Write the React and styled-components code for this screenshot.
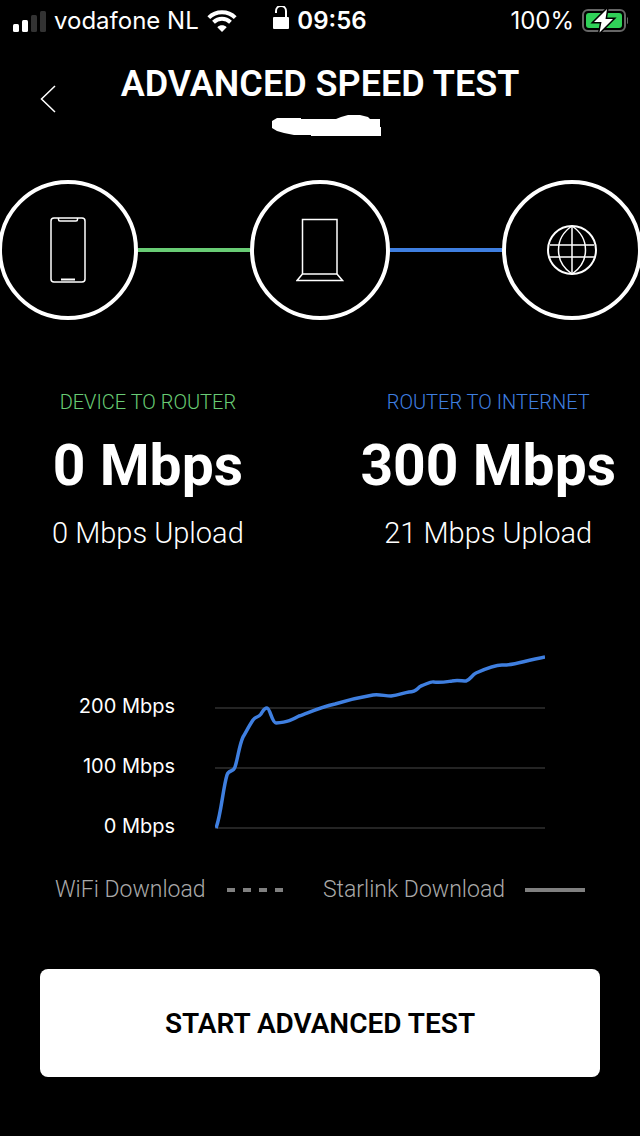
import React from 'react'
import styled, { createGlobalStyle, ThemeProvider } from 'styled-components'

const theme = {
  palette: {
    green: '#69cc75',
    blue: '#3f7fe0',
    gray1: '#242424',
    gray2: '#808080',
    gray3: '#a9a9a9',
  },
}

const GlobalStyle = createGlobalStyle`
  * {
    box-sizing: border-box;
  }

  body {
    margin: 0;
    background: black;
    color: white;
    font-family: Roboto, sans-serif;
  }

  h1, h2, p, ul {
    margin: 0;
    padding: 0;
  }

  svg {
    display: block;
    flex-shrink: 0;
  }
`

const Screen = styled.div`
  display: flex;
  flex-direction: column;
  min-height: 100vh;
`

const StatusBar = styled.header`
  display: grid;
  grid-template-columns: 1fr auto 1fr;
  align-items: center;
  height: 42px;
  padding-inline: 12px;
  font-family: Inter, sans-serif;
  font-size: 24px;
  line-height: 28px;
`

const StatusGroup = styled.div`
  display: flex;
  align-items: center;
  justify-content: ${(props) => props.$align || 'flex-start'};
  gap: 8px;
`

const Clock = styled.time`
  font-weight: 600;
`

const TitleBar = styled.div`
  display: grid;
  grid-template-columns: 56px 1fr 56px;
  align-items: center;
  padding: 18px 20px 0;
`

const BackButton = styled.button`
  display: flex;
  align-items: center;
  justify-content: center;
  height: 56px;
  padding: 0;
  border: none;
  background: none;
  color: white;
  cursor: pointer;
`

const TitleBlock = styled.div`
  display: flex;
  flex-direction: column;
  align-items: center;
  gap: 7px;
`

const Title = styled.h1`
  font-size: 36px;
  font-weight: 600;
  line-height: 48px;
  white-space: nowrap;
`

const Path = styled.div`
  display: flex;
  align-items: center;
  margin: 43px -2px 0;
`

const Node = styled.div`
  display: flex;
  align-items: center;
  justify-content: center;
  flex-shrink: 0;
  width: 140px;
  height: 140px;
  border: 4px solid white;
  border-radius: 50%;
`

const Link = styled.div`
  flex: 1;
  height: 4px;
  background: ${(props) => props.theme.palette[props.$color]};
`

const Results = styled.section`
  display: flex;
  justify-content: space-between;
  padding: 68px 24px 0 52px;
`

const Result = styled.div`
  display: flex;
  flex-direction: column;
  align-items: center;
  white-space: nowrap;
`

const ResultLabel = styled.h2`
  color: ${(props) => props.theme.palette[props.$color]};
  font-size: 20px;
  font-weight: 350;
  line-height: 28px;
`

const Download = styled.p`
  margin-top: 10px;
  font-size: 57px;
  font-weight: 700;
  line-height: 80px;
`

const Upload = styled.p`
  font-size: 29px;
  font-weight: 350;
  line-height: 54px;
`

const Chart = styled.section`
  display: flex;
  gap: 40px;
  padding: 87px 95px 0 76px;
`

const Scale = styled.ul`
  display: flex;
  flex-direction: column;
  align-items: flex-end;
  flex-shrink: 0;
  gap: 32px;
  width: 99px;
  padding-top: 45px;
  list-style: none;
  font-family: Inter, sans-serif;
  font-size: 20px;
  line-height: 28px;
  white-space: nowrap;
`

const Plot = styled.svg`
  flex: 1;
  min-width: 0;
  height: 184px;
`

const Legend = styled.ul`
  display: flex;
  justify-content: space-between;
  padding: 36px 55px 0;
  list-style: none;
`

const LegendItem = styled.li`
  display: flex;
  align-items: center;
  gap: 20px;
  color: ${(props) => props.theme.palette.gray3};
  font-size: 23px;
  font-weight: 350;
  line-height: 28px;
  white-space: nowrap;
`

const Footer = styled.footer`
  padding: 65px 40px 60px;
`

const PrimaryButton = styled.button`
  display: block;
  width: 100%;
  height: 108px;
  border: none;
  border-radius: 8px;
  background: white;
  color: black;
  font-family: inherit;
  font-size: 28px;
  font-weight: 600;
  cursor: pointer;
`

const SignalIcon = () => (
  <svg width="34" height="22" viewBox="0 0 34 22" fill="white">
    <rect x="1" y="14" width="6" height="8" rx="1.5" />
    <rect x="10" y="10" width="6" height="12" rx="1.5" />
    <rect x="19" y="5" width="6" height="17" rx="1.5" fill="#333" />
    <rect x="28" y="1" width="6" height="21" rx="1.5" fill="#333" />
  </svg>
)

const WifiIcon = () => (
  <svg width="30" height="22" viewBox="0 0 30 22" fill="none" stroke="white">
    <path d="M1.8 7.6C9 .4 21 .4 28.2 7.6" strokeWidth="4" />
    <path d="M6.5 12.3C11.3 7.7 18.7 7.7 23.5 12.3" strokeWidth="4" />
    <path d="M15 22 10.3 17.3C13 14.7 17 14.7 19.7 17.3Z" fill="white" stroke="none" />
  </svg>
)

const LockIcon = () => (
  <svg width="16" height="30" viewBox="0 0 16 30">
    <rect x="0" y="11" width="16" height="12" rx="1" fill="white" />
    <path d="M3 7V5a5 5 0 0 1 10 0v7" fill="none" stroke="white" strokeWidth="2" />
  </svg>
)

const BatteryIcon = () => (
  <svg width="46" height="24" viewBox="0 0 46 24">
    <rect x="1" y="1" width="42" height="21" rx="5" fill="none" stroke="#666" strokeWidth="2" />
    <path d="M45 8c2 1 2 6 0 7z" fill="#666" />
    <rect x="4" y="4" width="36" height="15" rx="3" fill="#30d158" />
    <path
      d="M25 0 12 13H19.500L17.500 23.500 31 10H23.500Z"
      fill="white"
      stroke="black"
      strokeWidth="3"
      paintOrder="stroke"
    />
  </svg>
)

const BackIcon = () => (
  <svg width="16" height="28" viewBox="0 0 16 28" fill="none" stroke="white" strokeWidth="1.5">
    <path d="M15 1 1.5 14 15 27" />
  </svg>
)

const Redaction = () => (
  <svg width="124" height="22" viewBox="-14 0 124 22">
    <path
      d="M0 6 5 3H29V4H64L69 2 76 0H88L96 2 98 4H108V12H109V21H39V20H22L12 18 5 16 0 13Z"
      fill="white"
    />
  </svg>
)

const PhoneIcon = () => (
  <svg width="36" height="66" viewBox="0 0 36 66" fill="none" stroke="white" strokeWidth="1.5">
    <rect x="1" y="1" width="34" height="64" rx="3" />
    <path d="M8.5 1V2.5Q8.5 4 10 4H26Q27.5 4 27.5 2.5V1" />
    <path d="M11 62.5H25" strokeWidth="2" />
  </svg>
)

const RouterIcon = () => (
  <svg width="48" height="64" viewBox="0 0 48 64" fill="none" stroke="white" strokeWidth="1.5">
    <path d="M6.5 56V1.5H41V56Z" />
    <path d="M6.5 56 1 62.5H46.5L41 56" />
  </svg>
)

const GlobeIcon = () => (
  <svg width="50" height="50" viewBox="0 0 50 50" fill="none" stroke="white" strokeWidth="1.5">
    <circle cx="25" cy="25" r="24" strokeWidth="2" />
    <path d="M25 1V49M3 20H47M3 32H47" />
    <path d="M25 1C7 13 7 37 25 49C43 37 43 13 25 1Z" />
  </svg>
)

const gridLines = [61, 121, 181]

const starlinkLine =
  'M1 181C6 168 8 141 12 128C14 122 18 126 20 120C23 111 24 99 28 90C31 85 34 79 38 73C41 69 43 71 46 67C48 64 49 61 52 61C55 61 57 76 61 76C73 75 77 73 84 69C93 66 103 61 120 57C133 53 146 50 158 48C164 47 170 49 176 49C184 48 188 46 194 45C202 45 202 41 206 39C212 37 216 34 219 35C225 36 230 35 237 34C242 33 247 34 251 34C255 33 257 28 261 26C270 22 279 18 287 18C297 19 308 14 330 10'

const DashedLine = () => (
  <svg width="60" height="4" stroke={theme.palette.gray2} strokeWidth="4">
    <path d="M1 2H57" strokeDasharray="8 8" />
  </svg>
)

const SolidLine = () => (
  <svg width="60" height="4" stroke={theme.palette.gray2} strokeWidth="4">
    <path d="M0 2H60" />
  </svg>
)

const SpeedChart = () => (
  <Chart aria-label="Download speed">
    <Scale>
      <li>200 Mbps</li>
      <li>100 Mbps</li>
      <li>0 Mbps</li>
    </Scale>
    <Plot viewBox="0 0 330 184" fill="none" preserveAspectRatio="none">
      {gridLines.map((y) => (
        <path key={y} d={`M0 ${y}H330`} stroke={theme.palette.gray1} strokeWidth="2" />
      ))}
      <path d={starlinkLine} stroke={theme.palette.blue} strokeWidth="3.5" />
    </Plot>
  </Chart>
)

const SpeedResult = ({ label, color, download, upload }) => (
  <Result>
    <ResultLabel $color={color}>{label}</ResultLabel>
    <Download>{download} Mbps</Download>
    <Upload>{upload} Mbps Upload</Upload>
  </Result>
)

const App = () => (
  <ThemeProvider theme={theme}>
    <GlobalStyle />
    <Screen>
      <StatusBar>
        <StatusGroup>
          <SignalIcon />
          <span>vodafone NL</span>
          <WifiIcon />
        </StatusGroup>
        <StatusGroup>
          <LockIcon />
          <Clock>09:56</Clock>
        </StatusGroup>
        <StatusGroup $align="flex-end">
          <span>100%</span>
          <BatteryIcon />
        </StatusGroup>
      </StatusBar>
      <TitleBar>
        <BackButton aria-label="Back">
          <BackIcon />
        </BackButton>
        <TitleBlock>
          <Title>ADVANCED SPEED TEST</Title>
          <Redaction />
        </TitleBlock>
      </TitleBar>
      <Path>
        <Node>
          <PhoneIcon />
        </Node>
        <Link $color="green" />
        <Node>
          <RouterIcon />
        </Node>
        <Link $color="blue" />
        <Node>
          <GlobeIcon />
        </Node>
      </Path>
      <Results>
        <SpeedResult label="DEVICE TO ROUTER" color="green" download={0} upload={0} />
        <SpeedResult label="ROUTER TO INTERNET" color="blue" download={300} upload={21} />
      </Results>
      <SpeedChart />
      <Legend>
        <LegendItem>
          WiFi Download
          <DashedLine />
        </LegendItem>
        <LegendItem>
          Starlink Download
          <SolidLine />
        </LegendItem>
      </Legend>
      <Footer>
        <PrimaryButton>START ADVANCED TEST</PrimaryButton>
      </Footer>
    </Screen>
  </ThemeProvider>
)

export default App
